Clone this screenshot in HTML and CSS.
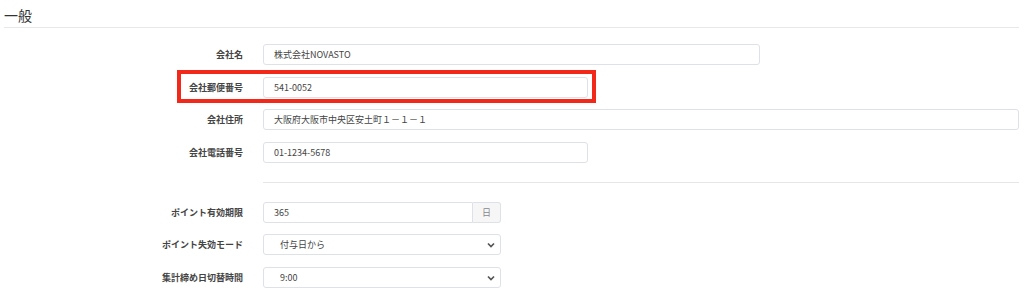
FILE: index.html
```html
<!DOCTYPE html>
<html>
<head>
  <meta charset="utf-8">
  <title>一般設定</title>
  <link rel="stylesheet" href="styles.css">
</head>
<body>
  <div class="page">
    <h2 class="section-title">一般</h2>

    <div class="form">
      <div class="row">
        <label class="label">会社名</label>
        <input class="field w-lg" value="株式会社NOVASTO">
      </div>
      <div class="row">
        <label class="label">会社郵便番号</label>
        <input class="field w-sm" value="541-0052">
        <div class="highlight"></div>
      </div>
      <div class="row">
        <label class="label">会社住所</label>
        <input class="field w-full" value="大阪府大阪市中央区安土町１－１－１">
      </div>
      <div class="row">
        <label class="label">会社電話番号</label>
        <input class="field w-sm" value="01-1234-5678">
      </div>

      <div class="row divider-row">
        <div></div>
        <hr class="divider">
      </div>

      <div class="row">
        <label class="label">ポイント有効期限</label>
        <div class="group w-xs">
          <input class="field grow" value="365">
          <span class="addon">日</span>
        </div>
      </div>
      <div class="row">
        <label class="label">ポイント失効モード</label>
        <div class="select-wrap w-xs">
          <select class="field select">
            <option>付与日から</option>
          </select>
          <svg class="chevron" width="8" height="6" viewBox="0 0 8 6"><path d="M1 1.5 L4 4.5 L7 1.5" fill="none" stroke="#555" stroke-width="1.7"/></svg>
        </div>
      </div>
      <div class="row">
        <label class="label">集計締め日切替時間</label>
        <div class="select-wrap w-xs">
          <select class="field select">
            <option>9:00</option>
          </select>
          <svg class="chevron" width="8" height="6" viewBox="0 0 8 6"><path d="M1 1.5 L4 4.5 L7 1.5" fill="none" stroke="#555" stroke-width="1.7"/></svg>
        </div>
      </div>
    </div>
  </div>
</body>
</html>
```

FILE: styles.css
```css
body {
  margin: 0;
  background: #fff;
  color: #333;
  font-family: "Noto Sans CJK JP", "Noto Sans", sans-serif;
}
.page {
  padding: 0 5px 0 4px;
}
.section-title {
  margin: 0;
  height: 28px;
  box-sizing: border-box;
  padding-top: 6px;
  font-size: 14px;
  font-weight: normal;
  line-height: 18px;
  color: #333;
  border-bottom: 1px solid #e8e8e8;
}
.form {
  padding-top: 16px;
}
.row {
  position: relative;
  display: grid;
  grid-template-columns: 239px 1fr;
  column-gap: 20px;
  align-items: center;
  margin-bottom: 11.6px;
}
.label {
  text-align: right;
  font-size: 9px;
  font-weight: bold;
  color: #444;
}
.field {
  display: block;
  box-sizing: border-box;
  height: 21px;
  padding: 0 10px;
  border: 1px solid #dfe1e8;
  border-radius: 3px;
  background: #fff;
  font-family: "Noto Sans CJK JP", "Noto Sans", sans-serif;
  font-size: 9px;
  color: #444;
  outline: none;
}
.w-lg { width: 497px; }
.w-sm { width: 325px; }
.w-full { width: 756px; }
.w-xs { width: 238px; }

.highlight {
  position: absolute;
  left: 173px;
  top: -7px;
  width: 419px;
  height: 33px;
  box-sizing: border-box;
  border: 4px solid #f2281b;
}

.divider-row {
  margin: 19px 0 19px;
}
.divider {
  margin: 0;
  border: none;
  border-top: 1px solid #e6e6e6;
}

.group {
  display: flex;
  height: 21px;
}
.group .grow {
  flex: 1;
  min-width: 0;
  border-radius: 3px 0 0 3px;
}
.addon {
  width: 28px;
  box-sizing: border-box;
  display: flex;
  align-items: center;
  justify-content: center;
  background: #f6f6f7;
  border: 1px solid #dfe1e8;
  border-left: none;
  border-radius: 0 3px 3px 0;
  font-size: 9px;
  color: #888;
}
.select-wrap {
  position: relative;
  height: 21px;
}
.select {
  width: 100%;
  padding-left: 16px;
  appearance: none;
  -webkit-appearance: none;
}
.chevron {
  position: absolute;
  right: 6px;
  top: 8px;
}
```
